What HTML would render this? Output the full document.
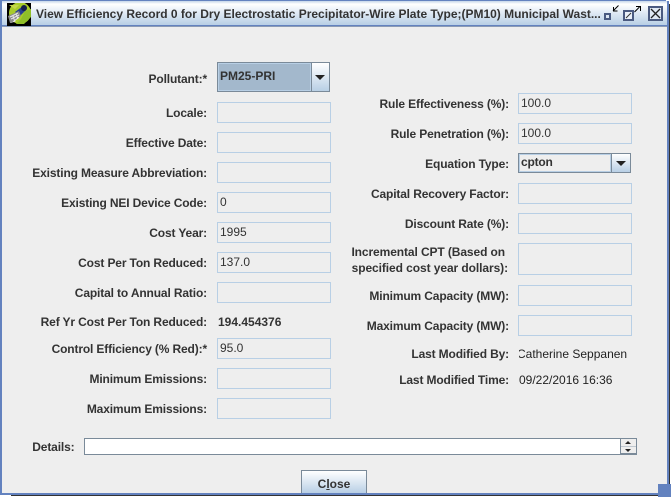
<!DOCTYPE html>
<html><head><meta charset="utf-8">
<style>
html,body{margin:0;padding:0;width:671px;height:497px;overflow:hidden;background:#fff}
body{position:relative;font-family:"Liberation Sans",sans-serif;font-size:12px;color:#333}
div{position:absolute;box-sizing:border-box}
.win{left:0;top:0;width:669px;height:495px;background:#6382bf}
.title{left:2px;top:1px;width:665px;height:24px;background:linear-gradient(#c6d6ea 0,#fff 3px,#e6eef7 10px,#b8cfe5 24px)}
.content{left:2px;top:26px;width:665px;height:467px;background:#eee;border-top:1px solid #8b9bb5}
.tt{left:36px;top:7px;font-weight:bold;font-size:12px;color:#333;white-space:nowrap;line-height:15px;letter-spacing:-.01px}
.l{font-weight:bold;text-align:right;white-space:nowrap;line-height:14px;height:14px;letter-spacing:-.14px}
.ll{left:0;width:207px}
.lr{left:300px;width:209px}
.f{border:1px solid #b8cfe5;background:#eee;padding:0 0 0 2px;line-height:18px;width:114px;height:21px;color:#333}
.fl{left:217px}
.fr{left:518px}
.v{white-space:nowrap;line-height:14px}
.arr{width:0;height:0;border-left:5px solid transparent;border-right:5px solid transparent;border-top:5px solid #222}
</style></head><body>
<div class="win"></div>
<div class="title"></div>
<div class="content"></div>
<div style="left:669px;top:4px;width:1px;height:480px;background:#333"></div>
<div style="left:658px;top:484px;width:13px;height:13px;background:#6382bf"></div>
<div style="left:666px;top:0;width:5px;height:1px;background:#fff"></div>

<svg style="position:absolute;left:7px;top:3px" width="24" height="23" viewBox="0 0 24 23">
<rect width="24" height="23" fill="#000"/>
<circle cx="13" cy="10" r="11" fill="#a8cc2a"/>
<path d="M2 2h10l-4 4z" fill="#c4d84a"/>
<path d="M18 8l6-2v8l-7 7H9l5-5z" fill="#8fbf28"/>
<path d="M8 9l8-6 4 3-7 7z" fill="#27408f"/>
<circle cx="17" cy="5" r="3" fill="#16204a"/>
<path d="M1 13l11-5 2 5-9 7H3z" fill="#8a8a8a"/>
<path d="M3 14l8-4M4 16l8-4M6 19l6-5M6 13l2 6M9 11l2 5" stroke="#e8e8e8" stroke-width="1" fill="none"/>
</svg>
<div class="tt">View Efficiency Record 0 for Dry Electrostatic Precipitator-Wire Plate Type;(PM10) Municipal Wast...</div>

<svg style="position:absolute;left:600px;top:0" width="66" height="24" viewBox="0 0 66 24" fill="none">
<rect x="4" y="13" width="7" height="6" fill="#fff"/>
<rect x="5" y="14" width="5" height="5" stroke="#4a5a80" stroke-width="2" fill="#dce6f2"/>
<path d="M18.500 5.500l-5.500 5.500M13.500 7v4h4" stroke="#000" stroke-width="1"/>
<rect x="24" y="11" width="9" height="9" stroke="#4a5a80" stroke-width="2" fill="#eaf0f8"/>
<path d="M26 18l5-5" stroke="#333"/>
<path d="M34.500 12l5-5M36 6.500h4.500v4.500" stroke="#000" stroke-width="1"/>
<rect x="49" y="7" width="13" height="13" stroke="#4a5a80" stroke-width="2" fill="#dfe8f3"/>
<path d="M51 9l9 9M60 9l-9 9" stroke="#222" stroke-width="1.300"/>
</svg>

<div class="l ll" style="top:72px">Pollutant:*</div>
<div style="left:217px;top:62px;width:113px;height:30px;border:1px solid #7a8a99;background:#a3b8cc"></div>
<div style="left:218px;top:63px;width:93px;height:28px;border:1px solid #b8cfe5;background:#a3b8cc;line-height:24px;padding-left:1px;font-weight:bold;color:#333">PM25-PRI</div>
<div style="left:311px;top:63px;width:18px;height:28px;background:linear-gradient(#fff,#b8cfe5);border-left:1px solid #7a8a99"></div>
<div class="arr" style="left:315px;top:75px"></div>

<div class="l ll" style="top:106px">Locale:</div><div class="f fl" style="top:102px"></div>
<div class="l ll" style="top:136px">Effective Date:</div><div class="f fl" style="top:132px"></div>
<div class="l ll" style="top:166px">Existing Measure Abbreviation:</div><div class="f fl" style="top:162px"></div>
<div class="l ll" style="top:196px">Existing NEI Device Code:</div><div class="f fl" style="top:192px">0</div>
<div class="l ll" style="top:226px">Cost Year:</div><div class="f fl" style="top:222px">1995</div>
<div class="l ll" style="top:256px">Cost Per Ton Reduced:</div><div class="f fl" style="top:252px">137.0</div>
<div class="l ll" style="top:286px">Capital to Annual Ratio:</div><div class="f fl" style="top:282px"></div>
<div class="l ll" style="top:315px">Ref Yr Cost Per Ton Reduced:</div><div class="v" style="left:218px;top:315px;font-weight:bold">194.454376</div>
<div class="l ll" style="top:342px">Control Efficiency (% Red):*</div><div class="f fl" style="top:338px">95.0</div>
<div class="l ll" style="top:372px">Minimum Emissions:</div><div class="f fl" style="top:368px"></div>
<div class="l ll" style="top:402px">Maximum Emissions:</div><div class="f fl" style="top:398px"></div>

<div class="l lr" style="top:97px">Rule Effectiveness (%):</div><div class="f fr" style="top:93px">100.0</div>
<div class="l lr" style="top:127px">Rule Penetration (%):</div><div class="f fr" style="top:123px">100.0</div>
<div class="l lr" style="top:157px">Equation Type:</div>
<div style="left:518px;top:153px;width:113px;height:20px;border:1px solid #7a8a99;background:#eee"></div>
<div style="left:519px;top:154px;width:92px;height:18px;border:1px solid #b8cfe5;line-height:15px;padding-left:1px;font-weight:bold;letter-spacing:-.2px">cpton</div>
<div style="left:611px;top:154px;width:19px;height:18px;background:linear-gradient(#fff,#b8cfe5);border-left:1px solid #7a8a99"></div>
<div class="arr" style="left:616px;top:161px"></div>
<div class="l lr" style="top:187px">Capital Recovery Factor:</div><div class="f fr" style="top:183px"></div>
<div class="l lr" style="top:217px">Discount Rate (%):</div><div class="f fr" style="top:213px"></div>
<div class="l" style="left:300px;width:205px;top:245px;letter-spacing:-.1px">Incremental CPT (Based on</div>
<div class="l lr" style="top:261px;width:208px;letter-spacing:-.08px">specified cost year dollars):</div>
<div class="f fr" style="top:243px;height:32px"></div>
<div class="l lr" style="top:289px">Minimum Capacity (MW):</div><div class="f fr" style="top:285px"></div>
<div class="l lr" style="top:319px">Maximum Capacity (MW):</div><div class="f fr" style="top:315px"></div>
<div class="l lr" style="top:347px">Last Modified By:</div>
<div class="v" style="left:519px;top:347px;width:112px;overflow:hidden;color:#222"><span style="margin-left:-2px">Catherine Seppanen</span></div>
<div class="l lr" style="top:373px">Last Modified Time:</div>
<div class="v" style="left:519px;top:373px;color:#222">09/22/2016 16:36</div>

<div class="l" style="left:0;width:74.500px;top:440px">Details:</div>
<div style="left:84px;top:438px;width:553px;height:17px;background:#fff;border:1px solid #7a8a99"></div>
<div style="left:620px;top:439px;width:16px;height:15px;background:#eee;border-left:1px solid #7a8a99"></div>
<div style="left:621px;top:446px;width:15px;height:1px;background:#c0c8d0"></div>
<div style="left:620px;top:453px;width:17px;height:2px;background:#7a8a99"></div>
<div style="left:625px;top:441px;width:0;height:0;border-left:3px solid transparent;border-right:3px solid transparent;border-bottom:3px solid #222"></div>
<div style="left:625px;top:449px;width:0;height:0;border-left:3px solid transparent;border-right:3px solid transparent;border-top:3px solid #222"></div>

<div style="left:301px;top:470px;width:66px;height:23px;border:1px solid #7a8a99;border-bottom:0;background:linear-gradient(#fff,#b8cfe5);text-align:center;font-weight:bold;line-height:26px;color:#333">C<u>l</u>ose</div>
<div style="left:11px;top:495px;width:647px;height:1px;background:#333"></div>
</body></html>
